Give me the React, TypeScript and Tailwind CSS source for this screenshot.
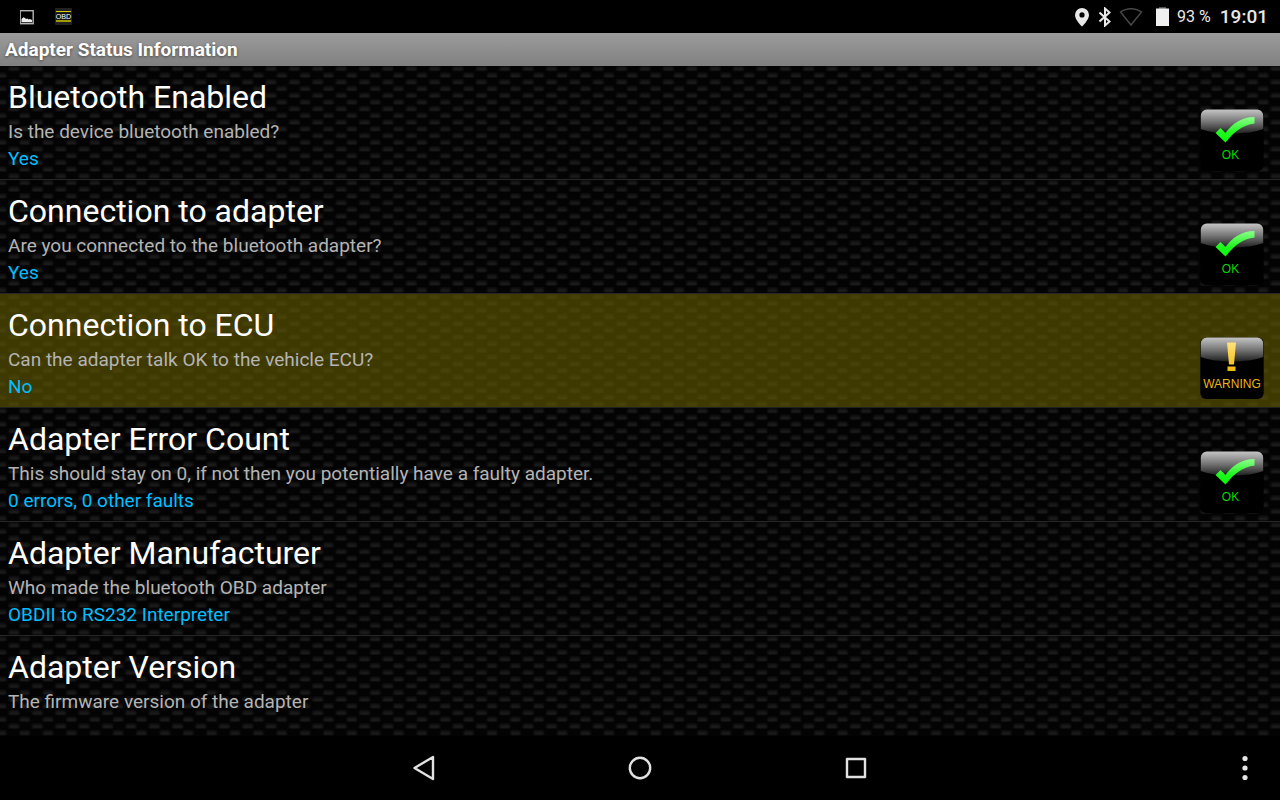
type Status = "ok" | "warning"

interface StatusItem {
  title: string
  description: string
  value?: string
  status?: Status
}

const items: StatusItem[] = [
  {
    title: "Bluetooth Enabled",
    description: "Is the device bluetooth enabled?",
    value: "Yes",
    status: "ok",
  },
  {
    title: "Connection to adapter",
    description: "Are you connected to the bluetooth adapter?",
    value: "Yes",
    status: "ok",
  },
  {
    title: "Connection to ECU",
    description: "Can the adapter talk OK to the vehicle ECU?",
    value: "No",
    status: "warning",
  },
  {
    title: "Adapter Error Count",
    description: "This should stay on 0, if not then you potentially have a faulty adapter.",
    value: "0 errors, 0 other faults",
    status: "ok",
  },
  {
    title: "Adapter Manufacturer",
    description: "Who made the bluetooth OBD adapter",
    value: "OBDII to RS232 Interpreter",
  },
  {
    title: "Adapter Version",
    description: "The firmware version of the adapter",
  },
]

function StatusBar() {
  return (
    <header className="flex h-[33px] items-center justify-between bg-black pr-3 pl-5 text-[#e8e8e8]">
      <div className="flex items-center gap-[19px]">
        <svg className="h-4 w-4" viewBox="0 0 16 16" aria-hidden="true">
          <rect x="0.2" y="1.7" width="13" height="13" fill="none" stroke="#b4b4b4" strokeWidth="1.4" />
          <path d="M1.5 13.2V10l2-1.7 1.5.7 1 1 1.5-.5 1 1 1.5-.5 2 1v2.200z" fill="#ececec" />
        </svg>
        <svg className="h-[17px] w-[17px]" viewBox="0 0 17 17" aria-hidden="true">
          <rect width="17" height="17" rx="1" fill="#222" />
          <path d="M1 3.5h15" stroke="#d8cc00" />
          <rect x="1" y="5" width="15" height="6.5" fill="#101010" />
          <path d="M1 13h15" stroke="#a39a00" strokeWidth="2" />
          <text x="8.5" y="10.7" textAnchor="middle" fontSize="7.2" fill="#fff" fontFamily="Liberation Sans, sans-serif">
            OBD
          </text>
        </svg>
      </div>
      <div className="flex items-center">
        <svg className="h-5 w-[14px]" viewBox="0 0 14 20" aria-hidden="true">
          <path
            d="M7 1a7 7 0 0 0-7 7c0 5 7 11.5 7 11.5s7-6.5 7-11.5a7 7 0 0 0-7-7zm0 9.500a2.600 2.600 0 1 1 0-5.200 2.600 2.600 0 0 1 0 5.200z"
            fill="#e8e8e8"
          />
        </svg>
        <svg className="ml-[10px] h-5 w-3" viewBox="0 0 12 20" aria-hidden="true">
          <path d="M.5 5.500l10 9-4.500 4v-17l4.500 4-10 9" fill="none" stroke="#e8e8e8" strokeWidth="2" />
        </svg>
        <svg className="ml-2 h-5 w-6" viewBox="0 0 24 20" aria-hidden="true">
          <path d="M1.500 5c6-4.500 15-4.500 21 0L12 18z" fill="none" stroke="#484848" strokeWidth="1.500" />
        </svg>
        <svg className="ml-[13px] h-5 w-[13px]" viewBox="0 0 13 20" aria-hidden="true">
          <path d="M3 0h7v2H3z" fill="#555" />
          <path d="M0 1.500h13V19H0z" fill="#f0f0f0" />
        </svg>
        <span className="ml-2 text-base">93 %</span>
        <time className="ml-[9px] pt-[2px] text-[19px] font-medium">19:01</time>
      </div>
    </header>
  )
}

/* Woven texture: short dashes, every second row shifted by half a step */
function CarbonTexture() {
  return (
    <svg className="absolute inset-0 h-full w-full" aria-hidden="true">
      <defs>
        <linearGradient id="dash" x1="0" y1="0" x2="1" y2="0">
          <stop offset="0" stopColor="#1f1f1f" stopOpacity="0" />
          <stop offset="0.25" stopColor="#1f1f1f" />
          <stop offset="0.75" stopColor="#1f1f1f" />
          <stop offset="1" stopColor="#1f1f1f" stopOpacity="0" />
        </linearGradient>
        <pattern id="weave" x="7.5" y="-0.5" width="23.37" height="13.42" patternUnits="userSpaceOnUse">
          <rect width="23.37" height="13.42" fill="#030303" />
          <g fill="url(#dash)">
            <rect x="0" y="0.4" width="13" height="5.2" opacity="0.5" />
            <rect x="0" y="2.4" width="13" height="2.3" opacity="0.7" />
            <rect x="11" y="7.1" width="12.3" height="5.2" opacity="0.5" />
            <rect x="11" y="9.1" width="12.3" height="2.3" opacity="0.7" />
          </g>
        </pattern>
      </defs>
      <rect width="100%" height="100%" fill="url(#weave)" />
    </svg>
  )
}

function StatusBadge({ status }: { status: Status }) {
  return (
    <svg className="h-16 w-16 shrink-0" viewBox="0 0 64 64" role="img" aria-label={status}>
      <defs>
        <linearGradient id="gloss" x1="0" y1="0" x2="0" y2="1">
          <stop offset="0" stopColor="#c4c4c4" />
          <stop offset="0.5" stopColor="#777" />
          <stop offset="1" stopColor="#202020" />
        </linearGradient>
        <linearGradient id="tick" x1="0" y1="0" x2="0" y2="1">
          <stop offset="0" stopColor="#8cff8c" />
          <stop offset="0.6" stopColor="#22f522" />
          <stop offset="1" stopColor="#00ff00" />
        </linearGradient>
        <linearGradient id="mark" x1="0" y1="0" x2="0" y2="1">
          <stop offset="0" stopColor="#ffe27a" />
          <stop offset="1" stopColor="#f2b90a" />
        </linearGradient>
      </defs>
      <rect x="0.3" y="1.6" width="63.4" height="61.4" rx="6" fill="#000" />
      <path d="M.8 21V7.600a6 6 0 0 1 6-6h50.400a6 6 0 0 1 6 6V21C48 27 16 27 .8 21z" fill="url(#gloss)" />
      {status === "ok" ? (
        <>
          <path d="M15.500 25l5-5 5 5C32 16 41 9 54.500 9v6.500C42 17 34 24 25.500 34.500z" fill="url(#tick)" />
          <text x="30.5" y="51" textAnchor="middle" fontSize="12" fill="#00d800" fontFamily="Liberation Sans, sans-serif">
            OK
          </text>
        </>
      ) : (
        <>
          <path d="M27 6.500h9l-2 22h-5zM27.500 30.500h8v4.500h-8z" fill="url(#mark)" />
          <text x="32" y="52" textAnchor="middle" fontSize="12" fill="#eab71a" fontFamily="Liberation Sans, sans-serif">
            WARNING
          </text>
        </>
      )}
    </svg>
  )
}

function StatusRow({ item }: { item: StatusItem }) {
  const warning = item.status === "warning"

  return (
    <li
      className={`flex h-[114px] shrink-0 items-end justify-between border-b pr-4 pl-2 ${
        warning ? "border-[#222] bg-[#665c00]/60" : "border-[#272727]"
      }`}
    >
      <div className="h-full pt-2">
        <h2 className="text-[32px] leading-[47px] text-white">{item.title}</h2>
        <p className="text-[19px] leading-[22px] text-[#b4b4b4]">{item.description}</p>
        {item.value && <p className="mt-[5px] text-[19px] leading-[22px] text-[#00bfff]">{item.value}</p>}
      </div>
      {item.status && (
        <div className="pb-[7px]">
          <StatusBadge status={item.status} />
        </div>
      )}
    </li>
  )
}

function NavigationBar() {
  return (
    <nav className="relative flex h-16 items-center justify-center gap-[184px] bg-black">
      <button type="button" aria-label="Back">
        <svg className="h-8 w-8" viewBox="0 0 32 32" fill="none" stroke="#e2e2e2" strokeWidth="2.4" strokeLinejoin="round">
          <path d="M25 5v22L6.500 16z" />
        </svg>
      </button>
      <button type="button" aria-label="Home">
        <svg className="h-8 w-8" viewBox="0 0 32 32" fill="none" stroke="#e2e2e2" strokeWidth="2.4">
          <circle cx="16" cy="16" r="10.2" />
        </svg>
      </button>
      <button type="button" aria-label="Recent apps">
        <svg className="h-8 w-8" viewBox="0 0 32 32" fill="none" stroke="#e2e2e2" strokeWidth="2.4" strokeLinejoin="round">
          <rect x="7" y="7" width="18" height="18" />
        </svg>
      </button>
      <button type="button" aria-label="More options" className="absolute right-[19px]">
        <svg className="h-8 w-8" viewBox="0 0 32 32" fill="#e6e6e6">
          <circle cx="16" cy="6.5" r="2.6" />
          <circle cx="16" cy="16" r="2.6" />
          <circle cx="16" cy="25.5" r="2.6" />
        </svg>
      </button>
    </nav>
  )
}

export default function App() {
  return (
    <div className="flex h-screen flex-col overflow-hidden bg-black font-[Roboto,sans-serif]">
      <StatusBar />
      <h1 className="h-[33px] shrink-0 bg-linear-to-b from-[#9c9c9c] to-[#808080] px-[5px] text-[19px] leading-[33px] font-bold text-white text-shadow-[0_1px_3px_#444]">
        Adapter Status Information
      </h1>
      <main className="relative min-h-0 flex-1 overflow-hidden">
        <CarbonTexture />
        <ul className="relative flex flex-col">
          {items.map((item) => (
            <StatusRow key={item.title} item={item} />
          ))}
        </ul>
      </main>
      <NavigationBar />
    </div>
  )
}
